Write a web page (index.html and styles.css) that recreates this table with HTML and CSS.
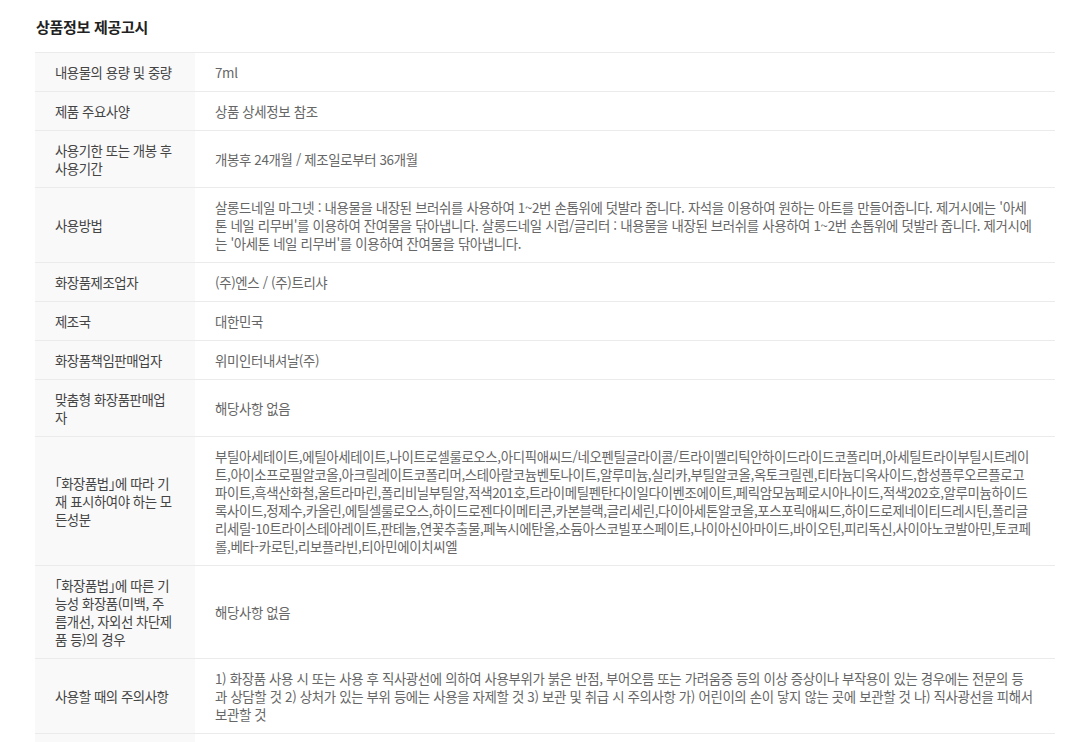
FILE: index.html
```html
<!DOCTYPE html>
<html lang="ko">
<head>
    <meta charset="UTF-8">
    <meta name="viewport" content="width=device-width, initial-scale=1.0">
    <title>상품정보 제공고시</title>
    <link rel="stylesheet" href="styles.css">
</head>
<body>
    <div class="container">
        <h2 class="info-title">상품정보 제공고시</h2>

        <table class="info-table">
            <tbody>
                <tr>
                    <th>내용물의 용량 및 중량</th>
                    <td>7ml</td>
                </tr>
                <tr>
                    <th>제품 주요사양</th>
                    <td>상품 상세정보 참조</td>
                </tr>
                <tr>
                    <th>사용기한 또는 개봉 후 사용기간</th>
                    <td>개봉후 24개월 / 제조일로부터 36개월</td>
                </tr>
                <tr>
                    <th>사용방법</th>
                    <td>살롱드네일 마그넷 : 내용물을 내장된 브러쉬를 사용하여 1~2번 손톱위에 덧발라 줍니다. 자석을 이용하여 원하는 아트를 만들어줍니다. 제거시에는 '아세톤 네일 리무버'를 이용하여 잔여물을 닦아냅니다. 살롱드네일 시럽/글리터 : 내용물을 내장된 브러쉬를 사용하여 1~2번 손톱위에 덧발라 줍니다. 제거시에는 '아세톤 네일 리무버'를 이용하여 잔여물을 닦아냅니다.</td>
                </tr>
                <tr>
                    <th>화장품제조업자</th>
                    <td>(주)엔스 / (주)트리샤</td>
                </tr>
                <tr>
                    <th>제조국</th>
                    <td>대한민국</td>
                </tr>
                <tr>
                    <th>화장품책임판매업자</th>
                    <td>위미인터내셔날(주)</td>
                </tr>
                <tr>
                    <th>맞춤형 화장품판매업자</th>
                    <td>해당사항 없음</td>
                </tr>
                <tr>
                    <th>「화장품법」에 따라 기재 표시하여야 하는 모든성분</th>
                    <td>부틸아세테이트,에틸아세테이트,나이트로셀룰로오스,아디픽애씨드/네오펜틸글라이콜/트라이멜리틱안하이드라이드코폴리머,아세틸트라이부틸시트레이트,아이소프로필알코올,아크릴레이트코폴리머,스테아랄코늄벤토나이트,알루미늄,실리카,부틸알코올,옥토크릴렌,티타늄디옥사이드,합성플루오르플로고파이트,흑색산화철,울트라마린,폴리비닐부틸알,적색201호,트라이메틸펜탄다이일다이벤조에이트,페릭암모늄페로시아나이드,적색202호,알루미늄하이드록사이드,정제수,카올린,에틸셀룰로오스,하이드로젠다이메티콘,카본블랙,글리세린,다이아세톤알코올,포스포릭애씨드,하이드로제네이티드레시틴,폴리글리세릴-10트라이스테아레이트,판테놀,연꽃추출물,페녹시에탄올,소듐아스코빌포스페이트,나이아신아마이드,바이오틴,피리독신,사이아노코발아민,토코페롤,베타-카로틴,리보플라빈,티아민에이치씨엘</td>
                </tr>
                <tr>
                    <th>「화장품법」에 따른 기능성 화장품(미백, 주름개선, 자외선 차단제품 등)의 경우</th>
                    <td>해당사항 없음</td>
                </tr>
                <tr>
                    <th>사용할 때의 주의사항</th>
                    <td>1) 화장품 사용 시 또는 사용 후 직사광선에 의하여 사용부위가 붉은 반점, 부어오름 또는 가려움증 등의 이상 증상이나 부작용이 있는 경우에는 전문의 등과 상담할 것 2) 상처가 있는 부위 등에는 사용을 자제할 것 3) 보관 및 취급 시 주의사항 가) 어린이의 손이 닿지 않는 곳에 보관할 것 나) 직사광선을 피해서 보관할 것</td>
                </tr>
                <tr>
                    <th>품질보증기준</th>
                    <td>본 제품에 이상이 있을 경우 공정거래위원회 고시 소비자분쟁해결기준에 의해 보상 받을 수 있습니다.</td>
                </tr>
            </tbody>
        </table>
    </div>
</body>
</html>
```

FILE: styles.css
```css
body {
    margin: 0;
    font-family: "Noto Sans CJK KR", "Noto Sans", sans-serif;
    background-color: #fff;
    color: #333;
}
.container {
    width: 1020px;
    padding: 17px 0 0 35px;
}
.info-title {
    margin: 0 0 15px 1px;
    font-size: 15px;
    font-weight: bold;
    line-height: 20px;
    letter-spacing: -0.3px;
    color: #222;
}
.info-table {
    width: 100%;
    border-collapse: collapse;
    border-top: 1px solid #ebebeb;
    font-size: 13.4px;
    line-height: 18px;
    word-break: break-all; /* 음절 단위 줄바꿈 */
    font-feature-settings: "halt"; /* 「」 괄호 반각 */
}
.info-table th,
.info-table td {
    padding: 10px 20px;
    border-bottom: 1px solid #ebebeb;
    text-align: left;
    vertical-align: middle;
    font-weight: normal;
}
/* 왼쪽 항목 칸 */
.info-table th {
    width: 120px;
    background-color: #f9f9f9;
    color: #444;
    letter-spacing: -0.45px;
}
.info-table td {
    color: #666;
    letter-spacing: -0.34px;
}
```
